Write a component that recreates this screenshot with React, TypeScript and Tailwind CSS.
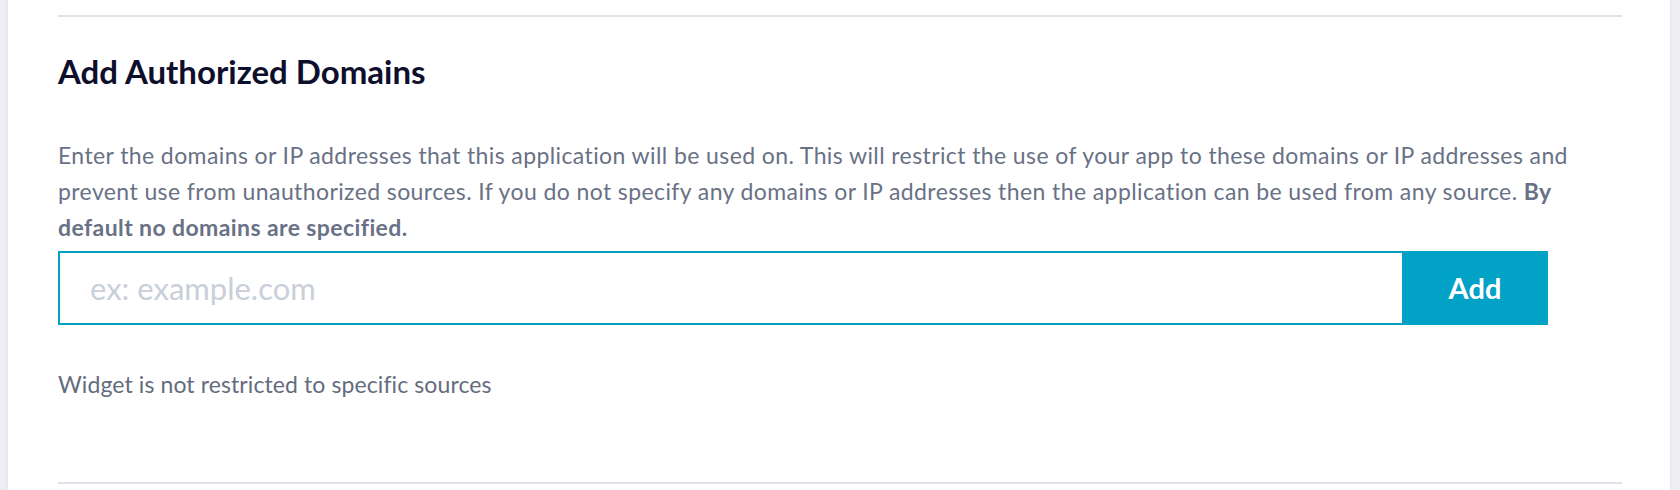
export default function App() {
  return (
    <div className="h-[490px] w-full overflow-hidden bg-[#eceef2] pl-[8px] pr-[10px] font-['Lato',sans-serif]">
      <div className="h-full bg-white pl-[50px] pr-[48px] pt-[15px] shadow-[0_0_4px_rgba(30,40,80,0.08)]">
        {/* top divider */}
        <div className="h-[2px] bg-[#dfe3e9]" />

        <h2 className="mt-[35px] text-[33px] leading-[38px] font-bold text-[#0e0f2c]">
          Add Authorized Domains
        </h2>

        <p className="mt-[47px] max-w-[1540px] text-[23px] leading-[36px] tracking-[0.4px] text-[#697185]">
          Enter the domains or IP addresses that this application will be used on. This will restrict the use of your
          app to these domains or IP addresses and prevent use from unauthorized sources. If you do not specify any
          domains or IP addresses then the application can be used from any source.{' '}
          <strong className="font-bold">By default no domains are specified.</strong>
        </p>

        <div className="mt-[6px] flex h-[74px] w-[1490px]">
          <input
            type="text"
            placeholder="ex: example.com"
            className="min-w-0 flex-1 border-2 border-r-0 border-[#05a1c5] bg-white pl-[30px] text-[31px] text-[#2b3042] outline-none placeholder:text-[#c9cfd9]"
          />
          <button className="w-[146px] bg-[#02a1c6] text-[29px] font-bold text-white">Add</button>
        </div>

        <p className="mt-[41px] text-[23px] leading-[36px] tracking-[0.1px] text-[#646c7e]">
          Widget is not restricted to specific sources
        </p>

        {/* bottom divider */}
        <div className="mt-[80px] h-[2px] bg-[#dfe3e9]" />
      </div>
    </div>
  );
}
